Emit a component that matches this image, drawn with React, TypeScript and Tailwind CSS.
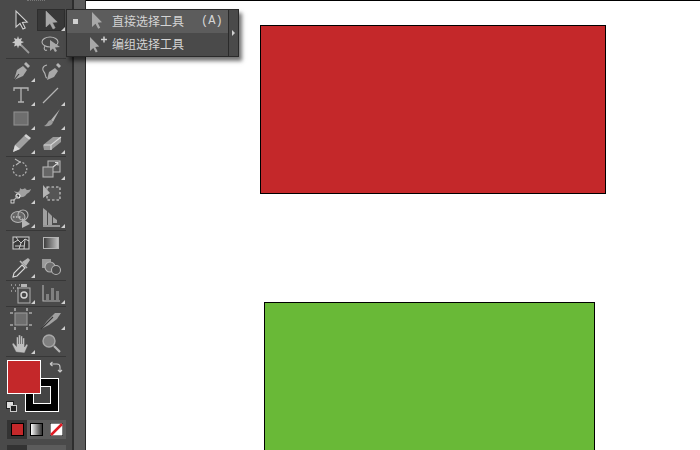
import type { ReactNode } from "react";

const ARROW = "M7 3v16l4-3.600 3 5.600 2.200-1.100-2.800-5.400 4.800-.5z";

function Icon({ children }: { children: ReactNode }) {
  return (
    <svg width="24" height="24" viewBox="0 0 24 24" fill="none" stroke="#b4b4b4" strokeWidth="1.100">
      {children}
    </svg>
  );
}

function Tool({ flag, active, children }: { flag?: boolean; active?: boolean; children: ReactNode }) {
  return (
    <div className="relative flex h-6 w-[30px] items-center justify-center">
      {active && <div className="absolute inset-x-[1px] inset-y-[1px] border border-[#2e2e2e] bg-[#383838]" />}
      <div className="relative flex">{children}</div>
      {flag && (
        <div className="absolute bottom-[1px] right-[1px] h-0 w-0 border-b-[4px] border-l-[4px] border-b-[#cfcfcf] border-l-transparent" />
      )}
    </div>
  );
}

function Divider() {
  return <div className="mx-auto h-[2px] w-[60px] border-b border-[#373737]" />;
}

function Row({ children }: { children: ReactNode }) {
  return <div className="flex pl-[6px]">{children}</div>;
}

function Toolbar() {
  return (
    <div className="relative flex h-[450px] w-[74px] shrink-0 flex-col overflow-hidden border-r-2 border-[#2e2e2e] bg-[#4a4a4a] pt-[8px]">
      <div className="absolute left-[27px] top-0 h-[2px] w-[18px] border-t border-dotted border-[#777777]" />
      <Row>
        <Tool>
          <Icon><path d={ARROW} fill="#3a3a3a" stroke="#d0d0d0" /></Icon>
        </Tool>
        <Tool flag active>
          <Icon><path d={ARROW} fill="#a8a8a8" stroke="#a8a8a8" strokeWidth="0.500" /></Icon>
        </Tool>
      </Row>
      <div className="h-[1px]" />
      <Row>
        <Tool>
          <Icon>
            <path d="M9 3l1 3 3-1-1 3 3 1-3 1.500 1 3-3-1-1 3-1-3-3 1 1-3-3-1 3-1.500-1-3 3 1z" fill="#c8c8c8" stroke="none" />
            <path d="M12 12l8 8" strokeWidth="1.800" stroke="#9a9a9a" />
          </Icon>
        </Tool>
        <Tool>
          <Icon>
            <ellipse cx="11" cy="9" rx="8" ry="5" />
            <path d="M6 13c-2 3 0 5 2 4" />
            <path d="M11 7v11l3-2.500 2 3.500 2-1-2-3.500 5-.5z" fill="#a8a8a8" stroke="none" />
          </Icon>
        </Tool>
      </Row>
      <Divider />
      <Row>
        <Tool flag>
          <Icon>
            <path d="M5 21l3-10 6-4 4 4-4 6z" fill="#a8a8a8" stroke="none" />
            <path d="M15 5l2-2 4 4-2 2z" fill="#b4b4b4" stroke="none" />
            <path d="M5 21l5-6" stroke="#3a3a3a" />
          </Icon>
        </Tool>
        <Tool>
          <Icon>
            <path d="M8 21l2-8 6-4 3 3-4 6z" fill="#a8a8a8" stroke="none" />
            <path d="M17 6l2-2 3 3-2 2z" fill="#b4b4b4" stroke="none" />
            <path d="M8 6c-5 1-5 5-3 7s1 6 3 6" />
          </Icon>
        </Tool>
      </Row>
      <Row>
        <Tool flag>
          <Icon>
            <path d="M5 8V5h14v3M12 5v14M9 19h6" strokeWidth="1.300" />
          </Icon>
        </Tool>
        <Tool flag>
          <Icon><path d="M4 20L19 5" strokeWidth="1.300" /></Icon>
        </Tool>
      </Row>
      <Row>
        <Tool flag>
          <Icon><rect x="5" y="5" width="14" height="13" fill="#6e6e6e" stroke="#8e8e8e" /></Icon>
        </Tool>
        <Tool flag>
          <Icon>
            <path d="M21 2L12 13l2 2z" fill="#b4b4b4" stroke="none" />
            <path d="M12 13c-3 0-3 4-7 6 4 1 8 0 9-4z" fill="#9a9a9a" stroke="none" />
          </Icon>
        </Tool>
      </Row>
      <Row>
        <Tool flag>
          <Icon>
            <path d="M4 21l2-7L15 5l5 4-9 9z" fill="#a0a0a0" stroke="none" />
            <path d="M15 5l2-2 5 4-2 2z" fill="#d0d0d0" stroke="none" />
            <path d="M4 21l2-7 5 4z" fill="#d8d8d8" stroke="none" />
          </Icon>
        </Tool>
        <Tool flag>
          <Icon>
            <path d="M4 14L14 6h8v5L12 19H5z" fill="#9a9a9a" stroke="none" />
            <path d="M5 14h7l10-8M12 14v5" stroke="#d8d8d8" />
          </Icon>
        </Tool>
      </Row>
      <Divider />
      <Row>
        <Tool flag>
          <Icon>
            <path d="M10 5a7 7 0 1 1-5 3" strokeDasharray="2 1.600" strokeWidth="1.200" />
            <path d="M6 2l5 3-4 3" />
          </Icon>
        </Tool>
        <Tool flag>
          <Icon>
            <rect x="9" y="4" width="12" height="11" fill="#555555" />
            <rect x="4" y="10" width="10" height="10" fill="#666666" />
            <path d="M14 10l5-4M16 5.500h3v3" stroke="#d8d8d8" />
          </Icon>
        </Tool>
      </Row>
      <Row>
        <Tool flag>
          <Icon>
            <path d="M5 10c4 2 6 1 6-3 2 2 4 1 5 0 1 2 3 3 6 1-1 4-4 4-5 6-3 3-6 3-7 0-1-1-3-1-5-4z" fill="#a0a0a0" stroke="none" />
            <circle cx="9" cy="15" r="2" fill="#3a3a3a" stroke="#f0f0f0" />
            <path d="M3 21l6-6" />
            <rect x="2" y="19" width="3" height="3" fill="#3a3a3a" stroke="#f0f0f0" strokeWidth="0.800" />
          </Icon>
        </Tool>
        <Tool>
          <Icon>
            <rect x="8" y="6" width="13" height="13" strokeDasharray="2.500 2" fill="#555555" stroke="#d8d8d8" />
            <path d="M4 4v13l4-3 3-2z" fill="#b4b4b4" stroke="none" />
          </Icon>
        </Tool>
      </Row>
      <Row>
        <Tool flag>
          <Icon>
            <ellipse cx="9" cy="12" rx="7" ry="5.500" fill="#666666" />
            <circle cx="14" cy="10" r="5" />
            <path d="M4 12h9" stroke="#f0f0f0" strokeDasharray="1.500 1.500" />
            <path d="M13 13v10l8-4z" fill="#b4b4b4" stroke="none" />
          </Icon>
        </Tool>
        <Tool flag>
          <Icon>
            <path d="M4 3l4 3v14H4zM9 7l4 4v9H9zM14 12l4 3v3h-4z" fill="#a0a0a0" stroke="none" />
            <path d="M4 21h17" stroke="#d8d8d8" />
          </Icon>
        </Tool>
      </Row>
      <Divider />
      <Row>
        <Tool>
          <Icon>
            <rect x="4" y="6" width="16" height="12" fill="#3a3a3a" stroke="#c4c4c4" />
            <path d="M4 12l5-3 3 3 4-4 4 2M9 9L7 6M12 12l-2 6M16 8l-1 10M6 15h9" stroke="#d8d8d8" strokeWidth="0.900" />
          </Icon>
        </Tool>
        <Tool>
          <svg width="24" height="24" viewBox="0 0 24 24">
            <defs>
              <linearGradient id="grad" x1="0" x2="1" y1="0" y2="0">
                <stop offset="0" stopColor="#3a3a3a" />
                <stop offset="1" stopColor="#c4c4c4" />
              </linearGradient>
            </defs>
            <rect x="4.500" y="6.500" width="15" height="11" fill="url(#grad)" stroke="#b4b4b4" />
          </svg>
        </Tool>
      </Row>
      <Row>
        <Tool flag>
          <Icon>
            <path d="M4 22l1-4 8-8 3 3-8 8z" fill="#4a4a4a" stroke="#d8d8d8" />
            <path d="M13 7l6-4 2 2-4 6z" fill="#b4b4b4" stroke="none" />
            <path d="M11 6l7 7" strokeWidth="1.600" />
          </Icon>
        </Tool>
        <Tool>
          <Icon>
            <rect x="3" y="4" width="9" height="9" fill="#9a9a9a" stroke="none" />
            <circle cx="11" cy="12" r="5" fill="#6e6e6e" stroke="#b4b4b4" />
            <circle cx="17" cy="15" r="4.500" fill="#4a4a4a" stroke="#b4b4b4" />
          </Icon>
        </Tool>
      </Row>
      <Divider />
      <Row>
        <Tool flag>
          <Icon>
            <path d="M2 4h1M6 4h1M10 4h1M4 7h1M8 7h1M2 10h1M6 10h1" stroke="#d8d8d8" strokeDasharray="1 1" />
            <rect x="12" y="3" width="6" height="3" fill="#b4b4b4" stroke="none" />
            <rect x="9" y="7" width="12" height="15" fill="#4a4a4a" stroke="#a8a8a8" />
            <circle cx="15" cy="14" r="3" stroke="#d8d8d8" strokeWidth="1.400" />
          </Icon>
        </Tool>
        <Tool flag>
          <Icon>
            <path d="M4 4v16h17" />
            <rect x="7" y="13" width="3" height="7" fill="#808080" stroke="none" />
            <rect x="12" y="7" width="3" height="13" fill="#808080" stroke="none" />
            <rect x="17" y="10" width="3" height="10" fill="#808080" stroke="none" />
          </Icon>
        </Tool>
      </Row>
      <Divider />
      <Row>
        <Tool>
          <Icon>
            <rect x="6" y="6" width="12" height="12" fill="#6e6e6e" stroke="#9a9a9a" />
            <path d="M6 1v3M18 1v3M6 20v3M18 20v3M1 6h3M1 18h3M20 6h3M20 18h3" stroke="#d8d8d8" />
          </Icon>
        </Tool>
        <Tool flag>
          <Icon>
            <path d="M2 22l6-8 8-8h6l-4 6-8 6z" fill="#a0a0a0" stroke="none" />
            <path d="M2 22l12-12" stroke="#3a3a3a" />
          </Icon>
        </Tool>
      </Row>
      <Row>
        <Tool flag>
          <Icon>
            <path d="M7 21L3 13l1.500-1 3 3.500V6h2v7-9h2v9-8h2v8-6h2v9l2-3 1.500 1-3.500 8z" fill="#bebebe" stroke="#4a4a4a" strokeWidth="0.400" />
          </Icon>
        </Tool>
        <Tool>
          <Icon>
            <circle cx="10" cy="10" r="6" fill="#808080" stroke="#a8a8a8" strokeWidth="1.400" />
            <path d="M15 15l6 6" strokeWidth="2.200" />
          </Icon>
        </Tool>
      </Row>
      <Divider />
      <ColorSection />
    </div>
  );
}

function ColorSection() {
  return (
    <div className="relative h-[93px] shrink-0">
      {/* fill and stroke swatches overlap, like the real panel */}
      <div className="absolute left-[25px] top-[21px] flex h-[34px] w-[34px] items-center justify-center border border-white bg-black">
        <div className="h-[18px] w-[18px] border border-white bg-[#444444]" />
      </div>
      <div className="absolute left-[7px] top-[3px] h-[34px] w-[34px] border border-white bg-[#c4282a]" />
      <svg className="absolute left-[49px] top-[3px]" width="14" height="14" viewBox="0 0 14 14" fill="none" stroke="#c8c8c8" strokeWidth="1.100">
        <path d="M1 4h7a3 3 0 0 1 3 3v5M1 4l2.500-2M1 4l2.500 2M11 12l-2-2M11 12l2-2" />
      </svg>
      <div className="absolute left-[6px] top-[44px] h-[8px] w-[8px] border border-[#222222] bg-[#dddddd]" />
      <div className="absolute left-[10px] top-[48px] h-[7px] w-[7px] border border-[#cccccc] bg-[#222222]" />
      <div className="absolute left-[7px] top-[63px] flex h-[19px] w-[59px] bg-[#5c5c5c]">
        <div className="flex w-[20px] items-center justify-center bg-[#333333]">
          <div className="h-[13px] w-[13px] border border-black bg-[#c4282a]" />
        </div>
        <div className="flex w-[19px] items-center justify-center">
          <div className="h-[13px] w-[13px] border border-black bg-gradient-to-r from-white to-[#333333]" />
        </div>
        <div className="flex w-[20px] items-center justify-center">
          <svg width="13" height="13" viewBox="0 0 13 13">
            <rect width="13" height="13" fill="#ffffff" stroke="#000000" />
            <path d="M1 12L12 1" stroke="#e01b24" strokeWidth="2.500" />
          </svg>
        </div>
      </div>
      <div className="absolute left-[7px] top-[88px] flex h-[5px] w-[59px] bg-[#5c5c5c]">
        <div className="w-[20px] bg-[#333333]" />
      </div>
    </div>
  );
}

function Flyout() {
  return (
    <div className="absolute left-[66px] top-[9px] flex h-[48px] w-[173px] border border-[#2a2a2a] bg-[#4a4a4a] text-[12px] leading-none text-[#d4d4d4] shadow-[3px_4px_4px_rgba(0,0,0,0.55)] [font-family:'Noto_Sans_CJK_SC',sans-serif]">
      <div className="flex flex-1 flex-col">
        <div className="flex h-[23px] items-center bg-[#5c5c5c]">
          <div className="ml-[6px] h-[5px] w-[5px] bg-[#d0d0d0]" />
          <svg className="ml-[10px]" width="16" height="20" viewBox="0 0 16 20">
            <path d="M4 1v15l3.500-3.300 2.700 5 2-1-2.500-4.900 4.300-.5z" fill="#a8a8a8" />
          </svg>
          <span className="ml-[8px] whitespace-nowrap">直接选择工具</span>
          <span className="ml-[17px] [font-family:'Liberation_Mono',monospace]">(A)</span>
        </div>
        <div className="flex h-[24px] items-center">
          <svg className="ml-[21px]" width="22" height="20" viewBox="0 0 22 20">
            <path d="M2 3v14l3.300-3 2.500 4.500 1.900-1-2.400-4.400 4-.5z" fill="#a8a8a8" />
            <path d="M13 5.500h6M16 2.500v6" stroke="#d0d0d0" strokeWidth="1.500" />
          </svg>
          <span className="ml-[2px] whitespace-nowrap">编组选择工具</span>
        </div>
      </div>
      <div className="flex w-[10px] items-center justify-center border-l border-[#2a2a2a]">
        <div className="h-0 w-0 border-y-[3px] border-l-[3px] border-y-transparent border-l-[#d0d0d0]" />
      </div>
    </div>
  );
}

export default function App() {
  return (
    <div className="relative flex h-[450px] w-[700px] overflow-hidden bg-white">
      <Toolbar />
      <div className="h-full w-[12px] shrink-0 border-r border-[#2a2a2a] bg-[#5c5c5c]" />
      <div className="relative flex-1 border-t border-black bg-white">
        <div className="absolute left-[174px] top-[24px] h-[169px] w-[346px] border border-black bg-[#c4282a]" />
        <div className="absolute left-[178px] top-[301px] h-[200px] w-[331px] border border-black bg-[#69b937]" />
      </div>
      <Flyout />
    </div>
  );
}
